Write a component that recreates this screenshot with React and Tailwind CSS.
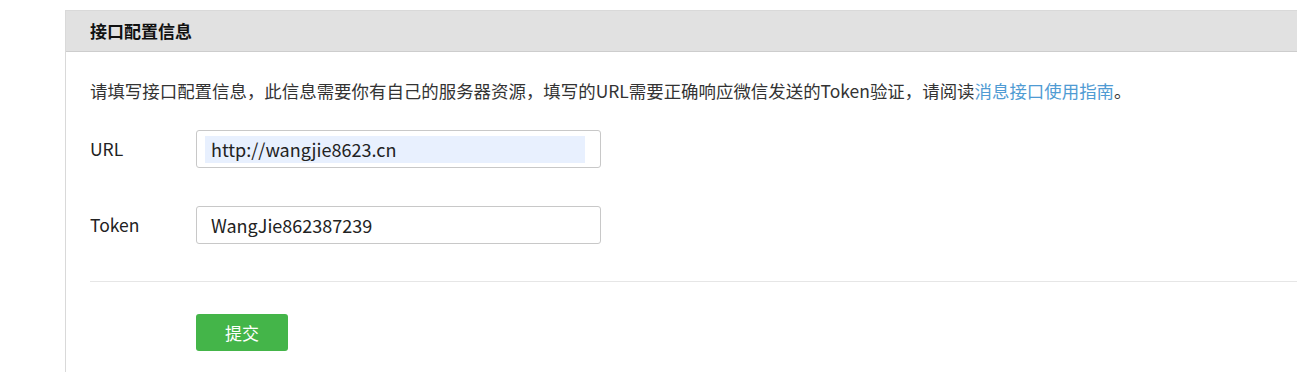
import { useState } from "react";

const font = { fontFamily: '"Noto Sans CJK SC", "Open Sans", sans-serif' };

function Field({ label, value, selected }) {
    return (
        <div className="flex items-center h-[38px]">
            <label className="w-[106px] text-[17.5px] text-[#222]">{label}</label>
            <div className="w-[405px] h-[38px] border border-[#c8c8c8] rounded-[3px] bg-white flex items-center px-[8px]">
                <div className={`flex-1 h-[27px] flex items-center pl-[6px] text-[18px] text-[#222] ${selected ? "bg-[#e8f0fe] mr-[7px]" : ""}`}>
                    {value}
                </div>
            </div>
        </div>
    );
}

export default function App() {
    const [url] = useState("http://wangjie8623.cn");
    const [token] = useState("WangJie862387239");

    return (
        <div className="w-[1297px] h-[372px] bg-white overflow-hidden pt-[10px] pl-[65px]" style={font}>
            <div className="border-l border-t border-[#d9d9d9] h-[400px]">
                <div className="h-[41px] bg-[#e1e1e1] border-b border-[#cdcdcd] flex items-center pl-[24px]">
                    <h2 className="text-[17px] font-bold text-[#111]">接口配置信息</h2>
                </div>

                <div className="pl-[24px]">
                    <p className="text-[17.45px] text-[#333] mt-[26px] leading-[26px] whitespace-nowrap">
                        请填写接口配置信息，此信息需要你有自己的服务器资源，填写的URL需要正确响应微信发送的Token验证，请阅读
                        <a className="text-[#4f9bd3]">消息接口使用指南</a>。
                    </p>

                    <div className="mt-[26px] flex flex-col gap-[38px]">
                        <Field label="URL" value={url} selected />
                        <Field label="Token" value={token} />
                    </div>

                    <div className="mt-[37px] border-t border-[#e6e6e6]" />

                    <div className="pl-[106px] mt-[32px]">
                        <button className="w-[92px] h-[37px] bg-[#44b549] rounded-[3px] text-white text-[17px]">
                            提交
                        </button>
                    </div>
                </div>
            </div>
        </div>
    );
}
